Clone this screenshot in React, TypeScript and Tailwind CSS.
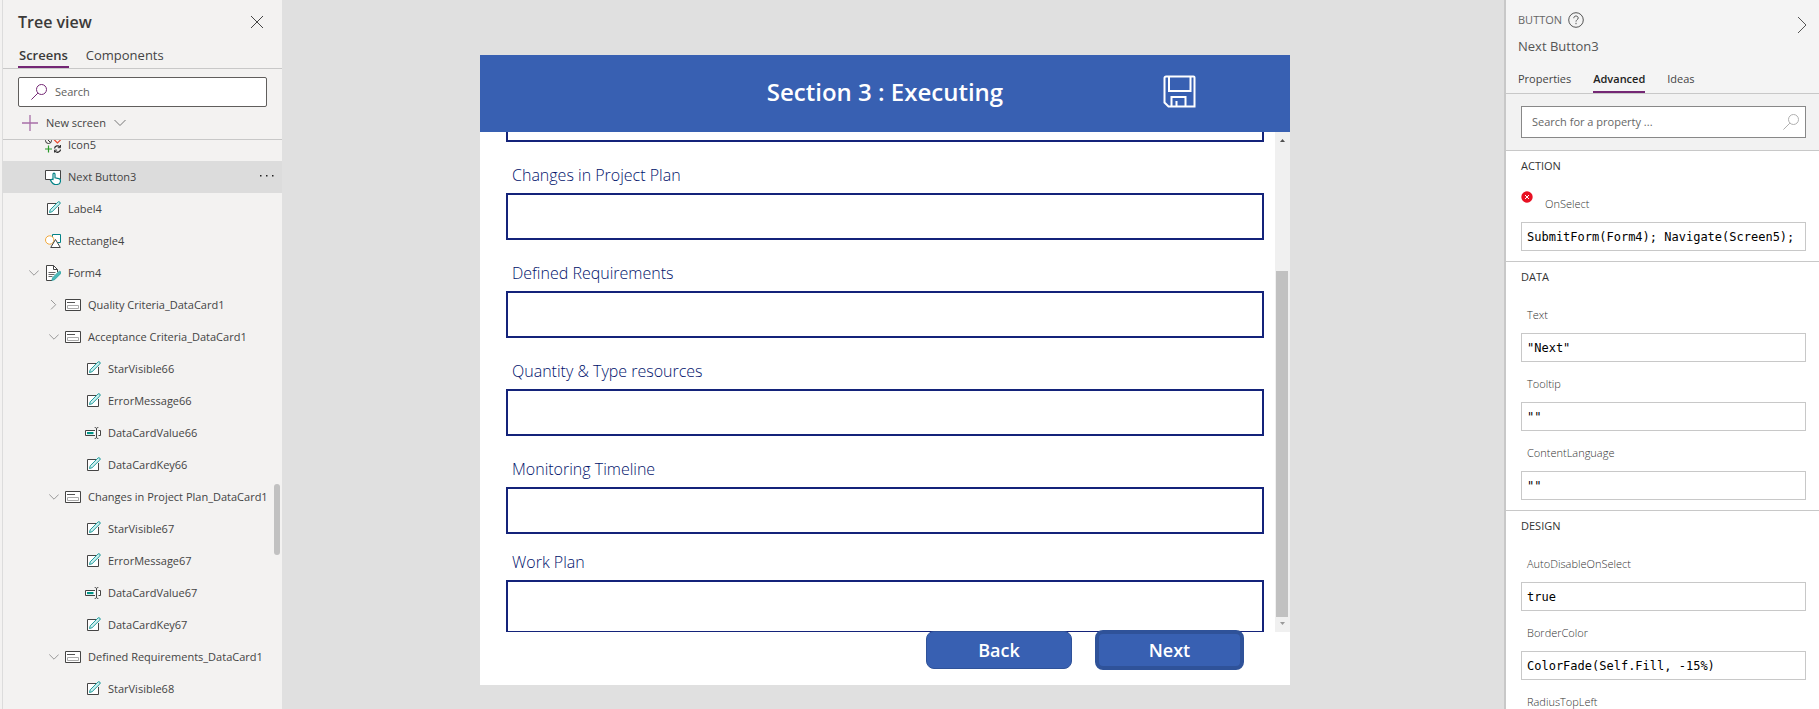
import React from "react";

type IconKind = "icons" | "button" | "label" | "shape" | "form" | "card" | "input";

interface TreeItem {
  name: string;
  icon: IconKind;
  level: 1 | 2 | 3;
  state?: "open" | "closed";
  selected?: boolean;
}

const treeItems: TreeItem[] = [
  { name: "Icon5", icon: "icons", level: 1 },
  { name: "Next Button3", icon: "button", level: 1, selected: true },
  { name: "Label4", icon: "label", level: 1 },
  { name: "Rectangle4", icon: "shape", level: 1 },
  { name: "Form4", icon: "form", level: 1, state: "open" },
  { name: "Quality Criteria_DataCard1", icon: "card", level: 2, state: "closed" },
  { name: "Acceptance Criteria_DataCard1", icon: "card", level: 2, state: "open" },
  { name: "StarVisible66", icon: "label", level: 3 },
  { name: "ErrorMessage66", icon: "label", level: 3 },
  { name: "DataCardValue66", icon: "input", level: 3 },
  { name: "DataCardKey66", icon: "label", level: 3 },
  { name: "Changes in Project Plan_DataCard1", icon: "card", level: 2, state: "open" },
  { name: "StarVisible67", icon: "label", level: 3 },
  { name: "ErrorMessage67", icon: "label", level: 3 },
  { name: "DataCardValue67", icon: "input", level: 3 },
  { name: "DataCardKey67", icon: "label", level: 3 },
  { name: "Defined Requirements_DataCard1", icon: "card", level: 2, state: "open" },
  { name: "StarVisible68", icon: "label", level: 3 },
];

const indents = { 1: "pl-[26px]", 2: "pl-[46px]", 3: "pl-[66px]" };

const formFields = [
  "Changes in Project Plan",
  "Defined Requirements",
  "Quantity & Type resources",
  "Monitoring Timeline",
];

const sections = [
  {
    title: "DATA",
    fields: [
      { name: "Text", value: '"Next"' },
      { name: "Tooltip", value: '""' },
      { name: "ContentLanguage", value: '""' },
    ],
  },
  {
    title: "DESIGN",
    fields: [
      { name: "AutoDisableOnSelect", value: "true" },
      { name: "BorderColor", value: "ColorFade(Self.Fill, -15%)" },
      { name: "RadiusTopLeft", value: "10" },
    ],
  },
];

function TreeIcon({ kind }: { kind: IconKind }) {
  return (
    <svg className="h-4 w-4 shrink-0" viewBox="0 0 16 16" fill="none">
      {kind === "icons" && (
        <>
          <circle cx="3.5" cy="3.5" r="3" stroke="#333" />
          <path d="M1.5 1.5l4 4" stroke="#333" />
          <path d="M12.5 6L9.3 2.800a1.700 1.700 0 0 1 3.200-1.400 1.700 1.700 0 0 1 3.200 1.400z" stroke="#e8492e" strokeWidth="1.2" />
          <path d="M3.500 8.500v7M0 12h7" stroke="#2b9a2b" strokeWidth="1.2" />
          <path d="M9.500 11.500a3.200 3.200 0 0 1 5.500-1.600M15.600 12.500a3.200 3.200 0 0 1-5.600 1.600" stroke="#333" strokeWidth="1.3" />
          <path d="M15.500 8v2.700h-2.700M9.500 15.500v-2.400h2.600" stroke="#333" />
        </>
      )}
      {kind === "button" && (
        <>
          <path d="M.5 1.500h15v9H.5z" fill="#fff" stroke="#444" />
          <path
            d="M8 10.500V5.200a1 1 0 0 1 2 0v3.600l3.800.8c1 .2 1.700.8 1.700 1.800 0 2.400-1.700 4.100-3.800 4.100h-1.400c-1.600 0-2.600-.9-3.400-2.100l-1.400-2.200c.6-.9 1.700-.9 2.500-.7z"
            fill="#fff"
            stroke="#038387"
            strokeWidth="1.2"
          />
        </>
      )}
      {kind === "label" && (
        <>
          <path d="M11 2.500H2.500v11h11V6" fill="#fff" stroke="#444" />
          <path d="M4.500 11.500l.7-2.700 7.700-7.700a1.300 1.300 0 0 1 1.900 1.900l-7.700 7.700z" fill="#cdeeee" stroke="#1f9c9c" />
        </>
      )}
      {kind === "shape" && (
        <>
          <path d="M7.500 1.500h8v8h-8z" fill="#fff" stroke="#038387" />
          <circle cx="4.700" cy="7" r="4.200" fill="#fff" stroke="#f2a93b" />
          <path d="M10.500 6.500l4.800 8H5.700z" fill="#fff" stroke="#444" />
        </>
      )}
      {kind === "form" && (
        <>
          <path d="M12.500 7V4.500l-4-4h-7v15H7" fill="#fff" stroke="#444" />
          <path d="M8.500.5v4h4" stroke="#444" />
          <path d="M3.500 7.500h7M3.500 9.500h6M3.500 11.500h4" stroke="#666" />
          <path d="M6.800 15.500l.8-2.800 6-6a1.400 1.400 0 0 1 2 2l-6 6z" fill="#4db8b8" stroke="#1f9c9c" strokeWidth=".7" />
        </>
      )}
      {kind === "card" && (
        <>
          <path d="M.5 2.500h15v11H.5z" fill="#fff" stroke="#444" />
          <path d="M2 5.500h8" stroke="#555" />
          <path d="M2.500 8.500h11v3h-11z" stroke="#aaa" />
        </>
      )}
      {kind === "input" && (
        <>
          <path d="M10 5.500H.5v5H10M13.500 5.500h2v5h-2" fill="#fff" stroke="#444" />
          <path d="M2 7h6.500v2.200H2z" fill="#009688" />
          <path d="M9.700 2.500c1.200 0 1.800.4 1.800 1.200v8.600c0 .8-.6 1.200-1.800 1.200M13.300 2.500c-1.200 0-1.800.4-1.800 1.200v8.600c0 .8.6 1.200 1.800 1.200" stroke="#444" />
        </>
      )}
    </svg>
  );
}

function Magnifier({ className }: { className: string }) {
  return (
    <svg className={className} viewBox="0 0 16 16" fill="none" stroke="currentColor">
      <circle cx="10.500" cy="5.500" r="5" />
      <path d="M6.900 9.100L.4 15.600" />
    </svg>
  );
}

function Twisty({ state }: { state?: "open" | "closed" }) {
  return (
    <svg className="mr-1.5 h-2.5 w-2.5 shrink-0" viewBox="0 0 10 10" fill="none" stroke="#999">
      {state === "open" && <path d="M.3 2.500L5 7.200l4.700-4.700" />}
      {state === "closed" && <path d="M2 0l4.700 4.700L2 9.400" />}
    </svg>
  );
}

function TreePanel() {
  return (
    <aside className="flex w-[282px] shrink-0 flex-col bg-[#f3f2f1] pl-0.5 text-[#444]">
      <div className="flex h-full min-h-0 flex-col border-l border-[#dcdcdc]">
        <div className="flex h-11 shrink-0 items-center justify-between pr-[18px] pl-[15px]">
          <h1 className="text-base font-semibold text-[#3b3a39]">Tree view</h1>
          <button aria-label="Close" className="text-[#444]">
            <svg className="h-[14px] w-[14px]" viewBox="0 0 14 14" fill="none" stroke="currentColor">
              <path d="M1 1l12 12M13 1L1 13" />
            </svg>
          </button>
        </div>
        <div className="flex h-[25px] shrink-0 gap-[17px] border-b border-[#c8c8c8] pl-[15px] text-[13px] leading-5">
          <button className="border-b-2 border-[#742774] px-px font-semibold text-[#3b3a39]">Screens</button>
          <button className="border-b-2 border-transparent">Components</button>
        </div>
        <div className="shrink-0 border-b border-[#c8c8c8] px-[15px] pt-2">
          <label className="flex h-[30px] items-center gap-2 rounded-[2px] border border-[#605e5c] bg-white pl-3">
            <Magnifier className="h-4 w-4 text-[#742774]" />
            <input
              type="text"
              placeholder="Search"
              aria-label="Search"
              className="min-w-0 flex-1 text-[11px] outline-none placeholder:text-[#605e5c]"
            />
          </label>
          <button className="flex h-8 items-center gap-2 pl-1 text-[11px]">
            <svg className="h-4 w-4" viewBox="0 0 16 16" fill="none" stroke="#a86fa8" strokeWidth="1.300">
              <path d="M8 0v16M0 8h16" />
            </svg>
            New screen
            <svg className="h-3 w-3" viewBox="0 0 12 12" fill="none" stroke="#777">
              <path d="M.5 3L6 8.500 11.500 3" />
            </svg>
          </button>
        </div>
        <div className="relative min-h-0 flex-1 overflow-hidden">
          {/* list is scrolled a third of a row down */}
          <ul className="-mt-[11px]">
            {treeItems.map((item) => (
              <li
                key={item.name}
                className={`flex h-8 items-center pr-[5px] text-[11px] whitespace-nowrap ${indents[item.level]} ${
                  item.selected ? "bg-[#dcdcdc]" : ""
                }`}
              >
                <Twisty state={item.state} />
                <TreeIcon kind={item.icon} />
                <span className="pl-[7px]">{item.name}</span>
                {item.selected && (
                  <button aria-label="More" className="mr-0.5 ml-auto text-[#222]">
                    <svg className="h-4 w-4" viewBox="0 0 16 16" fill="currentColor">
                      <path d="M1 6h1.500v1.500H1zM7 6h1.500v1.500H7zM13 6h1.500v1.500H13z" />
                    </svg>
                  </button>
                )}
              </li>
            ))}
          </ul>
          <div className="absolute top-[344px] right-0.5 h-[71px] w-1.5 rounded-full bg-[#c1c1c1]" />
        </div>
      </div>
    </aside>
  );
}

function FormField({ name, last }: { name: string; last?: boolean }) {
  return (
    <label className={`block ${last ? "-mt-[5px]" : ""}`}>
      <span className="block h-[35px] pl-1.5 text-base leading-[35px] font-light">{name}</span>
      <input
        type="text"
        className={`block w-full border-2 border-[#14237a] bg-white px-2 outline-none ${last ? "h-[53px]" : "h-[47px]"}`}
      />
    </label>
  );
}

function AppCanvas() {
  return (
    <main className="flex min-w-0 flex-1 items-start justify-center bg-[#e0e0e0] pt-[55px] pr-4">
      <div className="flex aspect-[9/7] w-full max-w-[810px] flex-col bg-white font-['Open_Sans',sans-serif]">
        <header className="relative flex h-[77px] shrink-0 items-center justify-center bg-[#3860b2] pb-1">
          <h2 className="text-2xl font-semibold text-white">Section 3 : Executing</h2>
          <button aria-label="Save" className="absolute top-5 right-[94px] text-white">
            <svg className="h-[33px] w-[33px]" viewBox="0 0 33 33" fill="none" stroke="currentColor" strokeWidth="2">
              <path d="M3 1.500h27.500a1 1 0 0 1 1 1v29H5.500l-4-4V3A1.500 1.500 0 0 1 3 1.500z" />
              <path d="M6 2v14h21.500V2" />
              <path d="M8.500 31.500V22h14v9.500M13.500 26v5" />
            </svg>
          </button>
        </header>
        <div className="flex min-h-0 flex-1 overflow-hidden">
          <div className="flex min-w-0 flex-1 flex-col gap-4 overflow-hidden pr-[11px] pl-[26px] text-[#00126b]">
            <input
              type="text"
              aria-label="Acceptance Criteria"
              className="-mt-[37px] h-[47px] w-full shrink-0 border-2 border-[#14237a] bg-white outline-none"
            />
            {formFields.map((name) => (
              <FormField key={name} name={name} />
            ))}
            <FormField name="Work Plan" last />
          </div>
          <div className="flex w-[15px] flex-col items-center bg-[#f0f0f0]">
            <svg className="h-[15px] w-[15px] shrink-0" viewBox="0 0 15 15">
              <path d="M5 10l2.500-3L10 10z" fill="#505050" />
            </svg>
            <div className="mt-[124px] mr-px w-3 flex-1 bg-[#c1c1c1]" />
            <svg className="h-[15px] w-[15px] shrink-0" viewBox="0 0 15 15">
              <path d="M5 5h5L7.500 8z" fill="#999" />
            </svg>
          </div>
        </div>
        <footer className="relative -mt-0.5 flex h-[55px] shrink-0 items-start justify-end gap-[23px] pr-[46px]">
          <button className="mt-px h-[38px] w-[146px] rounded-lg border border-[#2f5299] bg-[#3860b2] text-lg leading-6 font-semibold text-white">
            Back
          </button>
          <button className="h-10 w-[149px] rounded-lg border-4 border-[#2f5299] bg-[#3860b2] text-lg leading-6 font-semibold text-white">
            Next
          </button>
        </footer>
      </div>
    </main>
  );
}

const formulaClass =
  "block h-[29px] w-full border border-[#c8c8c8] bg-white px-[5px] font-['DejaVu_Sans_Mono',monospace] text-[12px] text-black outline-none";

function PropertyPanel() {
  return (
    <aside className="w-[315px] shrink-0 overflow-hidden border-l-2 border-[#c8c8c8] bg-white text-[11px] text-[#666]">
      <div className="border-b border-[#c8c8c8] bg-[#f4f4f4] px-3">
        <div className="flex items-start justify-between pt-2">
          <div>
            <div className="flex h-6 items-center gap-1.5">
              BUTTON
              <svg className="h-4 w-4" viewBox="0 0 16 16" fill="none" stroke="#555">
                <circle cx="8" cy="8" r="7.300" />
                <path d="M5.800 6.200c0-1.400 1-2.200 2.200-2.200s2.200.8 2.200 2c0 1.600-2.200 1.800-2.200 3.600" />
                <path d="M8 10.800v1.400" />
              </svg>
            </div>
            <div className="h-7 text-[13px] leading-7 text-[#555]">Next Button3</div>
          </div>
          <button aria-label="Collapse panel" className="mt-2 text-[#555]">
            <svg className="h-[18px] w-[10px]" viewBox="0 0 10 18" fill="none" stroke="currentColor">
              <path d="M1 1l8 8-8 8" />
            </svg>
          </button>
        </div>
        <nav className="flex h-[33px] items-end gap-[22px] text-[#444]">
          <button className="h-[26px] border-b-2 border-transparent">Properties</button>
          <button className="h-[26px] border-b-2 border-[#742774] font-semibold text-[#222]">Advanced</button>
          <button className="h-[26px] border-b-2 border-transparent">Ideas</button>
        </nav>
      </div>
      <div className="border-b border-[#c8c8c8] bg-[#f2f2f2] py-3 pr-[13px] pl-[15px]">
        <label className="flex h-8 items-center border border-[#888] bg-white pr-1.5 pl-2.5">
          <input
            type="text"
            placeholder="Search for a property ..."
            aria-label="Search for a property"
            className="min-w-0 flex-1 outline-none placeholder:text-[#666]"
          />
          <Magnifier className="h-4 w-4 text-[#b0b0b0]" />
        </label>
      </div>
      <section className="pr-[13px] pb-2.5 pl-[15px]">
        <h3 className="h-[30px] leading-[30px] text-[#333]">ACTION</h3>
        <div className="flex h-[41px] gap-3">
          <svg className="mt-[10px] h-3 w-3" viewBox="0 0 12 12">
            <circle cx="6" cy="6" r="5.700" fill="#e81123" />
            <path d="M4 4l4 4M8 4L4 8" stroke="#fff" />
          </svg>
          <label htmlFor="onselect" className="mt-[5px] h-9 leading-9 font-light text-[#333]">
            OnSelect
          </label>
        </div>
        <input id="onselect" className={formulaClass} defaultValue="SubmitForm(Form4); Navigate(Screen5);" />
      </section>
      {sections.map((section) => (
        <section key={section.title} className="border-t border-[#c8c8c8] pr-[13px] pb-2.5 pl-[15px]">
          <h3 className="mb-[5px] h-[30px] leading-[30px] text-[#333]">{section.title}</h3>
          <div className="flex flex-col gap-1">
            {section.fields.map((field) => (
              <label key={field.name} className="block">
                <span className="block h-9 pl-1.5 leading-9 font-light text-[#333]">{field.name}</span>
                <input className={formulaClass} defaultValue={field.value} />
              </label>
            ))}
          </div>
        </section>
      ))}
    </aside>
  );
}

export default function App(): React.ReactElement {
  return (
    <div className="flex h-screen w-full overflow-hidden font-['Open_Sans',sans-serif]">
      <TreePanel />
      <AppCanvas />
      <PropertyPanel />
    </div>
  );
}
